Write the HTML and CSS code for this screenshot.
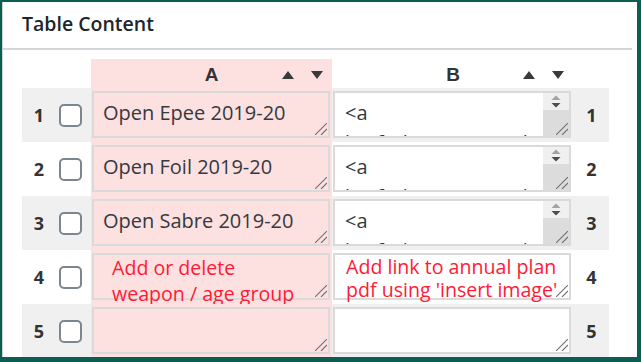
FILE: index.html
```html
<!DOCTYPE html>
<html lang="en">
<head>
<meta charset="utf-8">
<title>Table Content</title>
<link rel="stylesheet" href="styles.css">
</head>
<body>
<div class="frame">
  <div class="panel-head"><h2 class="title">Table Content</h2></div>
  <div class="table">
    <div class="row head">
      <div class="num"></div>
      <div class="chk"></div>
      <div class="col-a colhead"><span class="label">A</span><span class="sorts"><span class="tri up"></span><span class="tri down"></span></span></div>
      <div class="col-b colhead"><span class="label">B</span><span class="sorts"><span class="tri up"></span><span class="tri down"></span></span></div>
      <div class="num"></div>
    </div>

    <div class="row alt">
      <div class="num">1</div>
      <div class="chk"><span class="box"></span></div>
      <div class="col-a"><div class="ta"><div class="ta-text">Open Epee 2019-20</div><svg class="grip" viewBox="0 0 12 12"><line x1="0" y1="12" x2="12" y2="0"/><line x1="6" y1="12" x2="12" y2="6"/></svg></div></div>
      <div class="col-b"><div class="ta tb"><div class="ta-text">&lt;a<br>href="https://www.britishfencing.com/</div><div class="sb"><svg class="sb-btns" viewBox="0 0 26 17"><polygon class="ar-up" points="8.5,7 17.5,7 13,2.5"/><polygon class="ar-dn" points="8.5,10 17.5,10 13,14.5"/></svg><span class="sb-track"></span></div><svg class="grip" viewBox="0 0 12 12"><line x1="0" y1="12" x2="12" y2="0"/><line x1="6" y1="12" x2="12" y2="6"/></svg></div></div>
      <div class="num">1</div>
    </div>

    <div class="row">
      <div class="num">2</div>
      <div class="chk"><span class="box"></span></div>
      <div class="col-a"><div class="ta"><div class="ta-text">Open Foil 2019-20</div><svg class="grip" viewBox="0 0 12 12"><line x1="0" y1="12" x2="12" y2="0"/><line x1="6" y1="12" x2="12" y2="6"/></svg></div></div>
      <div class="col-b"><div class="ta tb"><div class="ta-text">&lt;a<br>href="https://www.britishfencing.com/</div><div class="sb"><svg class="sb-btns" viewBox="0 0 26 17"><polygon class="ar-up" points="8.5,7 17.5,7 13,2.5"/><polygon class="ar-dn" points="8.5,10 17.5,10 13,14.5"/></svg><span class="sb-track"></span></div><svg class="grip" viewBox="0 0 12 12"><line x1="0" y1="12" x2="12" y2="0"/><line x1="6" y1="12" x2="12" y2="6"/></svg></div></div>
      <div class="num">2</div>
    </div>

    <div class="row alt">
      <div class="num">3</div>
      <div class="chk"><span class="box"></span></div>
      <div class="col-a"><div class="ta"><div class="ta-text">Open Sabre 2019-20</div><svg class="grip" viewBox="0 0 12 12"><line x1="0" y1="12" x2="12" y2="0"/><line x1="6" y1="12" x2="12" y2="6"/></svg></div></div>
      <div class="col-b"><div class="ta tb"><div class="ta-text">&lt;a<br>href="https://www.britishfencing.com/</div><div class="sb"><svg class="sb-btns" viewBox="0 0 26 17"><polygon class="ar-up" points="8.5,7 17.5,7 13,2.5"/><polygon class="ar-dn" points="8.5,10 17.5,10 13,14.5"/></svg><span class="sb-track"></span></div><svg class="grip" viewBox="0 0 12 12"><line x1="0" y1="12" x2="12" y2="0"/><line x1="6" y1="12" x2="12" y2="6"/></svg></div></div>
      <div class="num">3</div>
    </div>

    <div class="row">
      <div class="num">4</div>
      <div class="chk"><span class="box"></span></div>
      <div class="col-a"><div class="ta"><div class="ta-text"></div><svg class="grip" viewBox="0 0 12 12"><line x1="0" y1="12" x2="12" y2="0"/><line x1="6" y1="12" x2="12" y2="6"/></svg></div><span class="note note-a">Add or delete<br>weapon / age group</span></div>
      <div class="col-b"><div class="ta tb"><div class="ta-text"></div><svg class="grip" viewBox="0 0 12 12"><line x1="0" y1="12" x2="12" y2="0"/><line x1="6" y1="12" x2="12" y2="6"/></svg></div><span class="note note-b">Add link to annual plan<br>pdf using 'insert image'</span></div>
      <div class="num">4</div>
    </div>

    <div class="row alt">
      <div class="num">5</div>
      <div class="chk"><span class="box"></span></div>
      <div class="col-a"><div class="ta"><div class="ta-text"></div><svg class="grip" viewBox="0 0 12 12"><line x1="0" y1="12" x2="12" y2="0"/><line x1="6" y1="12" x2="12" y2="6"/></svg></div></div>
      <div class="col-b"><div class="ta tb"><div class="ta-text"></div><svg class="grip" viewBox="0 0 12 12"><line x1="0" y1="12" x2="12" y2="0"/><line x1="6" y1="12" x2="12" y2="6"/></svg></div></div>
      <div class="num">5</div>
    </div>
  </div>
</div>
</body>
</html>
```
FILE: styles.css
```css
html, body {
  margin: 0;
  padding: 0;
}
body {
  background: #0b5e51;
  width: 641px;
  height: 362px;
  overflow: hidden;
  font-family: "Open Sans", "Noto Sans", sans-serif;
  color: #343a40;
}
.frame {
  margin: 2px 4px 0 2px;
  height: 355px;
  background: #fff;
  border-left: 1px solid #cfd2d4;
  overflow: hidden;
}
.panel-head {
  height: 46px;
  margin-right: 5px;
  border-bottom: 2px solid #d3d6d8;
  padding-left: 19px;
}
.title {
  margin: 0;
  font-size: 19.5px;
  font-weight: 600;
  line-height: 43px;
  color: #212529;
}
.table {
  margin: 9px 0 0 19px;
  width: 587px;
}
.row {
  display: grid;
  grid-template-columns: 34px 35px 241px 242px 35px;
  height: 54px;
}
.row.head {
  height: 29px;
}
.row.alt {
  background: #f0f0f0;
}
.num {
  display: flex;
  align-items: center;
  justify-content: center;
  font-size: 18px;
  font-weight: 700;
  color: #333;
}
.chk {
  display: flex;
  align-items: center;
}
.box {
  width: 19px;
  height: 19px;
  margin-left: 3px;
  border: 2px solid #7c868f;
  border-radius: 5px;
  background: #fff;
}
.col-a {
  background: #fde0e0;
  position: relative;
  padding: 3px 0 0 1px;
}
.col-b {
  position: relative;
  padding: 3px 0 0 1px;
}
.colhead {
  display: grid;
  grid-template-columns: 1fr auto 1fr;
  align-items: center;
}
.col-a.colhead {
  padding: 0 9px;
}
.col-b.colhead {
  padding: 0 10px;
}
.label {
  grid-column: 2;
  font-family: "Liberation Sans", Arial, sans-serif;
  font-weight: 700;
  font-size: 19px;
  color: #333;
  line-height: 29px;
  padding-top: 1px;
}
.sorts {
  grid-column: 3;
  justify-self: end;
  display: flex;
  gap: 17px;
  align-items: center;
  padding-top: 1px;
}
.tri {
  width: 0;
  height: 0;
  border-left: 6px solid transparent;
  border-right: 6px solid transparent;
}
.tri.up {
  border-bottom: 8px solid #3a3a3a;
}
.tri.down {
  border-top: 8px solid #3a3a3a;
}
.ta {
  position: relative;
  box-sizing: border-box;
  width: 238px;
  height: 47px;
  border: 2px solid #dadada;
  display: flex;
  overflow: hidden;
}
.tb {
  background: #fff;
}
.ta-text {
  flex: 1;
  min-width: 0;
  padding: 5px 9px 0;
  font-size: 20px;
  line-height: 30px;
  color: #343a40;
  white-space: nowrap;
  overflow: hidden;
}
.tb .ta-text {
  padding-left: 10px;
}
.sb {
  width: 26px;
  display: flex;
  flex-direction: column;
}
.sb-btns {
  display: block;
  width: 26px;
  height: 17px;
  background: #f0f0f0;
}
.ar-up {
  fill: #a3a3a3;
}
.ar-dn {
  fill: #4d4d4d;
}
.sb-track {
  flex: 1;
  background: #dcdcdc;
}
.grip {
  position: absolute;
  right: 1px;
  bottom: 1px;
  width: 12px;
  height: 12px;
  stroke: #6e6e6e;
  stroke-width: 1.1;
}
.note {
  position: absolute;
  font-size: 19.6px;
  color: #ff1a35;
  white-space: nowrap;
}
.note-a {
  left: 21px;
  top: 5px;
  line-height: 26px;
}
.note-b {
  left: 14px;
  top: 5px;
  line-height: 23px;
}
```
